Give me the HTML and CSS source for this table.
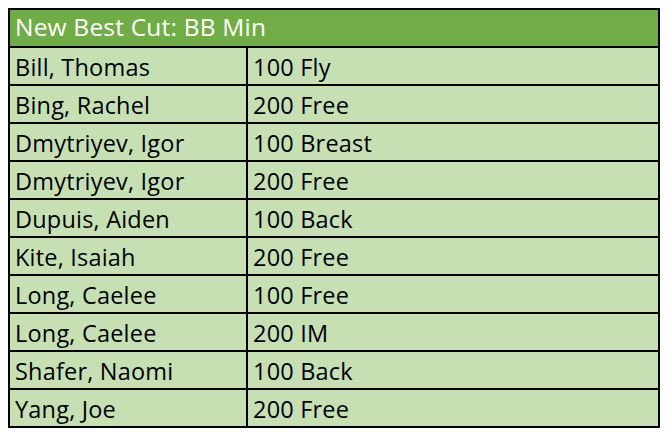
FILE: index.html
```html
<!DOCTYPE html>
<html>
<head>
<meta charset="utf-8">
<link rel="stylesheet" href="styles.css">
</head>
<body>
<div class="sheet">
  <div class="row head"><div class="cell full">New Best Cut: BB Min</div></div>
  <div class="row"><div class="cell name">Bill, Thomas</div><div class="cell ev">100 Fly</div></div>
  <div class="row"><div class="cell name">Bing, Rachel</div><div class="cell ev">200 Free</div></div>
  <div class="row"><div class="cell name">Dmytriyev, Igor</div><div class="cell ev">100 Breast</div></div>
  <div class="row"><div class="cell name">Dmytriyev, Igor</div><div class="cell ev">200 Free</div></div>
  <div class="row"><div class="cell name">Dupuis, Aiden</div><div class="cell ev">100 Back</div></div>
  <div class="row"><div class="cell name">Kite, Isaiah</div><div class="cell ev">200 Free</div></div>
  <div class="row"><div class="cell name">Long, Caelee</div><div class="cell ev">100 Free</div></div>
  <div class="row"><div class="cell name">Long, Caelee</div><div class="cell ev">200 IM</div></div>
  <div class="row"><div class="cell name">Shafer, Naomi</div><div class="cell ev">100 Back</div></div>
  <div class="row"><div class="cell name">Yang, Joe</div><div class="cell ev">200 Free</div></div>
</div>
</body>
</html>
```
FILE: styles.css
```css
body {
  margin: 8px;
  background: #ffffff;
  font-family: "Open Sans", sans-serif;
}
.sheet {
  width: 648px;
  border: 2px solid #000;
  background: #c6e0b4;
}
.row {
  display: flex;
  height: 36px;
  border-top: 2px solid #000;
}
.row.head {
  border-top: none;
  background: #70ad47;
}
.cell {
  box-sizing: border-box;
  height: 36px;
  padding: 4px 0 0 5px;
  font-size: 23.5px;
  line-height: 30px;
  letter-spacing: 0.2px;
  color: #000;
  white-space: nowrap;
}
.full {
  color: #fff;
  font-size: 24.5px;
  padding-top: 2px;
}
.name {
  width: 238px;
  border-right: 2px solid #000;
}
.ev {
  flex: 1;
}
```
